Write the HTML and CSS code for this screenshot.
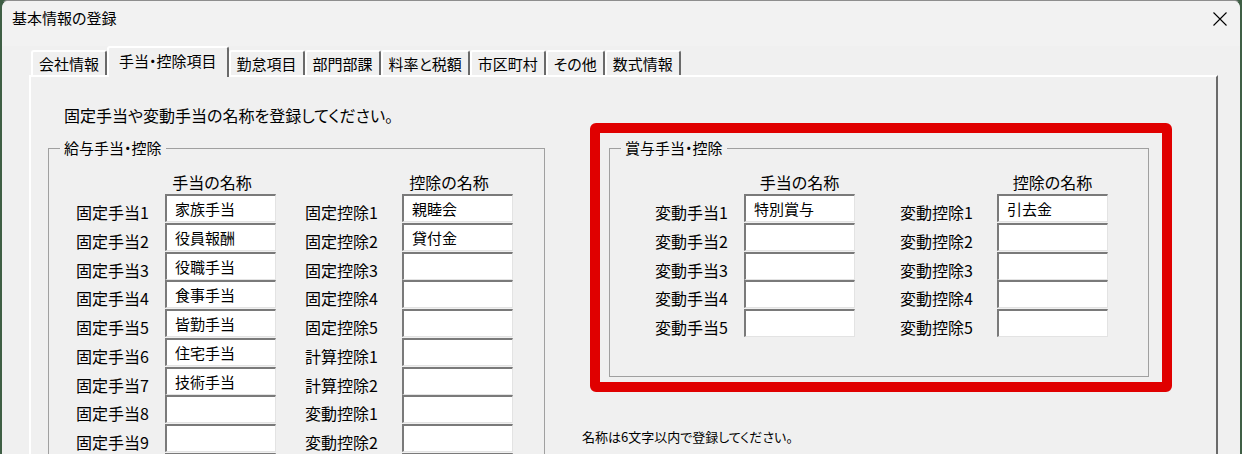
FILE: index.html
```html
<!DOCTYPE html>
<html lang="ja">
<head>
    <meta charset="UTF-8">
    <title>基本情報の登録</title>
    <link rel="stylesheet" href="styles.css">
</head>
<body>
    <div class="window">
        <div class="titlebar">
            <span class="title">基本情報の登録</span>
            <svg class="close" width="14" height="14" viewBox="0 0 14 14">
                <path d="M0.5 0.5 L13.5 13.5 M13.5 0.5 L0.5 13.5" stroke="#000" stroke-width="1.1" fill="none"/>
            </svg>
        </div>

        <div class="tabs">
            <div class="tab">会社情報</div>
            <div class="tab active">手当・控除項目</div>
            <div class="tab">勤怠項目</div>
            <div class="tab">部門部課</div>
            <div class="tab">料率と税額</div>
            <div class="tab">市区町村</div>
            <div class="tab">その他</div>
            <div class="tab">数式情報</div>
        </div>

        <div class="panel">
            <!-- 給与（固定・計算・変動） -->
            <div class="col-left">
                <p class="intro">固定手当や変動手当の名称を登録してください。</p>
                <fieldset class="group group-salary">
                    <legend>給与手当・控除</legend>
                    <div class="cols">
                        <div class="col">
                            <div class="col-head">手当の名称</div>
                            <label>固定手当1</label><input type="text" value="家族手当">
                            <label>固定手当2</label><input type="text" value="役員報酬">
                            <label>固定手当3</label><input type="text" value="役職手当">
                            <label>固定手当4</label><input type="text" value="食事手当">
                            <label>固定手当5</label><input type="text" value="皆勤手当">
                            <label>固定手当6</label><input type="text" value="住宅手当">
                            <label>固定手当7</label><input type="text" value="技術手当">
                            <label>固定手当8</label><input type="text" value="">
                            <label>固定手当9</label><input type="text" value="">
                            <label></label><input type="text" value="">
                        </div>
                        <div class="col">
                            <div class="col-head">控除の名称</div>
                            <label>固定控除1</label><input type="text" value="親睦会">
                            <label>固定控除2</label><input type="text" value="貸付金">
                            <label>固定控除3</label><input type="text" value="">
                            <label>固定控除4</label><input type="text" value="">
                            <label>固定控除5</label><input type="text" value="">
                            <label>計算控除1</label><input type="text" value="">
                            <label>計算控除2</label><input type="text" value="">
                            <label>変動控除1</label><input type="text" value="">
                            <label>変動控除2</label><input type="text" value="">
                            <label></label><input type="text" value="">
                        </div>
                    </div>
                </fieldset>
            </div>

            <!-- 賞与 -->
            <div class="col-right">
                <div class="highlight">
                    <fieldset class="group group-bonus">
                        <legend>賞与手当・控除</legend>
                        <div class="cols">
                            <div class="col">
                                <div class="col-head">手当の名称</div>
                                <label>変動手当1</label><input type="text" value="特別賞与">
                                <label>変動手当2</label><input type="text" value="">
                                <label>変動手当3</label><input type="text" value="">
                                <label>変動手当4</label><input type="text" value="">
                                <label>変動手当5</label><input type="text" value="">
                            </div>
                            <div class="col">
                                <div class="col-head">控除の名称</div>
                                <label>変動控除1</label><input type="text" value="引去金">
                                <label>変動控除2</label><input type="text" value="">
                                <label>変動控除3</label><input type="text" value="">
                                <label>変動控除4</label><input type="text" value="">
                                <label>変動控除5</label><input type="text" value="">
                            </div>
                        </div>
                    </fieldset>
                </div>
                <p class="note">名称は6文字以内で登録してください。</p>
            </div>
        </div>
    </div>
</body>
</html>
```

FILE: styles.css
```css
body {
    margin: 0;
    background-color: #3f5f45;
    font-family: "Noto Sans CJK JP", "Noto Sans", sans-serif;
    font-feature-settings: "palt";
    color: #000;
}
.window {
    width: 1242px;
    height: 454px;
    box-sizing: border-box;
    overflow: hidden;
    background-color: #f0f0f0;
    border-top: 1px solid #8e8e8e;
    border-left: 2px solid #3f5f45;
    border-right: 2px solid #3f5f45;
    border-radius: 8px 8px 0 0;
}
.titlebar {
    display: flex;
    justify-content: space-between;
    align-items: flex-start;
    height: 45px;
    box-sizing: border-box;
    padding: 7px 13px 0 10px;
    background-color: #f2f2f2;
}
.title {
    font-size: 15px;
    line-height: 20px;
}
.close {
    margin-top: 4px;
}

/* タブ */
.tabs {
    display: flex;
    align-items: flex-end;
    height: 31px;
    margin-left: 29px;
    margin-bottom: -2px;
    position: relative;
    z-index: 1;
}
.tab {
    height: 25px;
    box-sizing: border-box;
    margin-bottom: 2px;
    padding: 2px 6px 0 6px;
    font-size: 15px;
    line-height: 20px;
    white-space: nowrap;
    background-color: #f0f0f0;
    border-top: 2px solid #fff;
    border-left: 2px solid #fff;
    border-right: 2px solid #6a6a6a;
    border-radius: 3px 3px 0 0;
}
.tab.active {
    height: 31px;
    margin-bottom: 0;
    padding: 3px 10px 0 10px;
}

.panel {
    display: flex;
    gap: 37px;
    width: 1189px;
    height: 400px;
    box-sizing: border-box;
    margin-left: 27px;
    padding: 28px 0 0 17px;
    border-top: 2px solid #fff;
    border-left: 2px solid #fff;
    border-right: 2px solid #6a6a6a;
}
.col-left {
    width: 497px;
}
.col-right {
    width: 590px;
}
.intro {
    margin: 0 0 13px 16px;
    font-size: 16px;
    line-height: 20px;
}

/* グループ枠 */
.group {
    margin: 0;
    padding: 14px 0 0 0;
    border: 1px solid #a0a0a0;
}
.group legend {
    margin-left: 11px;
    padding: 0 4px;
    font-size: 15px;
    line-height: 20px;
}
.group-salary {
    width: 497px;
    box-sizing: border-box;
}
.group-bonus {
    padding-bottom: 38px;
}
.cols {
    display: flex;
}
.group-salary .cols {
    gap: 29px;
    padding-left: 27px;
}
.group-bonus .cols {
    gap: 45px;
    padding-left: 45px;
}
.col {
    display: grid;
    grid-template-columns: 89px 111px;
    grid-template-rows: 22px;
    grid-auto-rows: 28.75px;
}
.col + .col {
    grid-template-columns: 97px 111px;
}
.col-head {
    grid-column: 2;
    text-align: center;
    font-size: 16px;
    line-height: 20px;
    white-space: nowrap;
}
.group-salary .col-head {
    padding-right: 17px;
}
.col label {
    grid-column: 1;
    padding-top: 8px;
    font-size: 16px;
    line-height: 20px;
    white-space: nowrap;
}
.col input {
    grid-column: 2;
    width: 111px;
    height: 28px;
    box-sizing: border-box;
    margin: 0;
    padding: 0 0 0 8px;
    font-family: "Noto Sans CJK JP", sans-serif;
    font-feature-settings: "palt";
    font-size: 15px;
    color: #000;
    background-color: #fff;
    border-top: 2px solid #7a7a7a;
    border-left: 2px solid #7a7a7a;
    border-bottom: 1px solid #e3e3e3;
    border-right: 1px solid #e3e3e3;
    outline: none;
}

/* 赤枠 */
.highlight {
    width: 582px;
    box-sizing: border-box;
    margin: 18px 0 0 8px;
    padding: 5px 13px 5px 9px;
    border: 10px solid #e00000;
    border-radius: 6px;
}
.note {
    margin: 35px 0 0 0;
    font-size: 13px;
    line-height: 20px;
}
```
